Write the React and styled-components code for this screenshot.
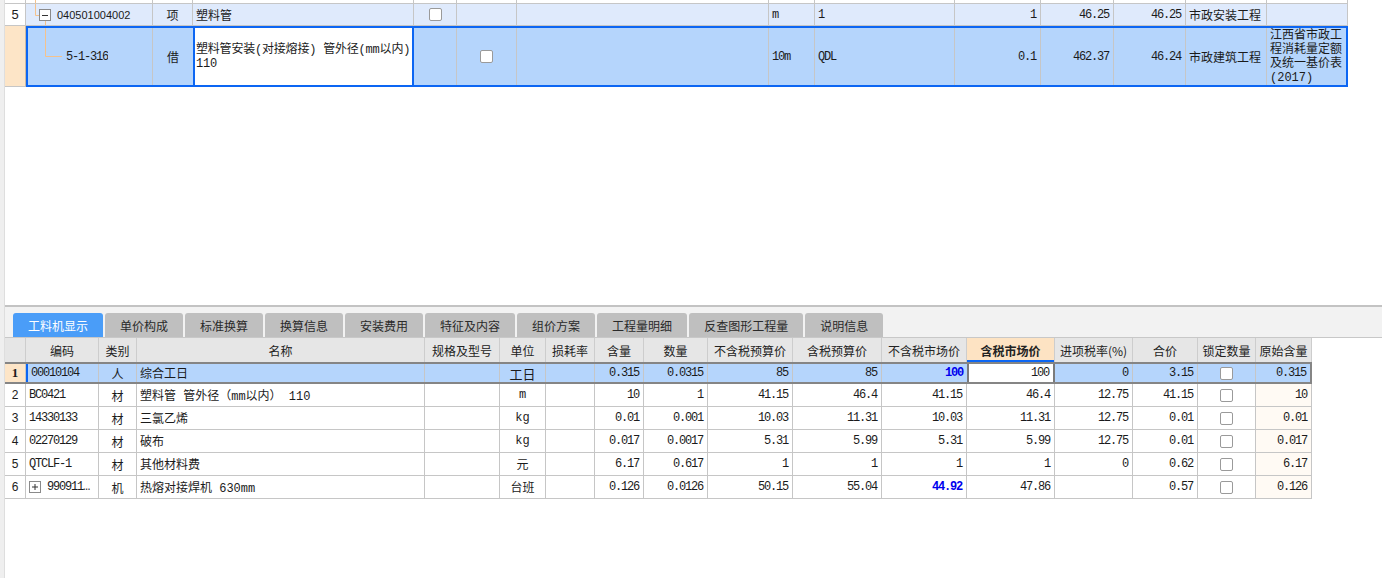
import React from "react";
import styled, { createGlobalStyle } from "styled-components";

const CJK = `"Noto Sans CJK SC", "Noto Sans", sans-serif`;
const MONO = `"Liberation Mono", "Noto Sans CJK SC", monospace`;
const SANS = `"Liberation Sans", "Noto Sans CJK SC", sans-serif`;
const SERIF = `"Liberation Serif", "Noto Sans CJK SC", serif`;

const GRID = "#c6c6c6";
const DARK = "#858585";
const BLUE = "#0c66f3";
const PEACH = "#fde5c7";
const ROW_BLUE = "#dfeafc";
const SEL_BLUE = "#b5d5fc";
const TREE = "#f4c28d";

const fonts = { cjk: CJK, mono: MONO, num: MONO, sans: SANS, serif: SERIF };

const TOP_COLS = [21, 127, 40, 221, 43, 60, 252, 46, 140, 86, 73, 72, 81, 81];
const SEL_COLS = [125, 40, 221, 43, 60, 252, 46, 140, 86, 73, 72, 81, 79];
const BOT_COLS = [21, 73, 38, 288, 75, 46, 49, 49, 64, 85, 89, 85, 88, 78, 65, 58, 56];
const px = (a) => a.map((v) => v + "px").join(" ");
const sum = (a) => a.reduce((s, v) => s + v, 0);

const GlobalStyle = createGlobalStyle`
  *, *::before, *::after { box-sizing: border-box; }
  html, body { margin: 0; padding: 0; background: #fff; }
  body { font-family: ${CJK}; font-size: 12px; color: #1b1b1b; }
`;

const Frame = styled.div`
  display: flex;
  width: 1382px;
  height: 578px;
  overflow: hidden;
  background: #fff;
`;

const Rail = styled.div`
  width: 5px;
  flex: none;
  background: #efefef;
  border-right: 1px solid #dedede;
`;

const Main = styled.div`
  flex: 1;
  min-width: 0;
  display: flex;
  flex-direction: column;
`;

const TopPane = styled.div`
  height: 305px;
  flex: none;
  overflow: hidden;
`;

const Splitter = styled.div`
  height: 2px;
  flex: none;
  background: #c3c3c3;
`;

const Cell = styled.div`
  display: flex;
  align-items: center;
  justify-content: ${(p) =>
    p.$align === "right" ? "flex-end" : p.$align === "center" ? "center" : "flex-start"};
  min-width: 0;
  padding: ${(p) =>
    p.$pad ?? (p.$align === "right" ? "0 4px 0 2px" : p.$align === "center" ? "0" : "0 2px 0 3px")};
  border-right: ${(p) => p.$right ?? `1px solid ${GRID}`};
  border-left: ${(p) => p.$left ?? "none"};
  background: ${(p) => p.$bg ?? "transparent"};
  color: ${(p) => p.$color ?? "inherit"};
  font-family: ${(p) => fonts[p.$font ?? "cjk"]};
  font-size: ${(p) => p.$size ?? 12}px;
  font-weight: ${(p) => (p.$bold ? 700 : 400)};
  letter-spacing: ${(p) => (p.$font === "num" ? "-1.2px" : "0")};
  white-space: nowrap;
  overflow: hidden;
`;

const WrapCell = styled(Cell)`
  white-space: normal;
  word-break: break-all;
  line-height: 14px;
`;

const EditCell = styled(Cell)`
  line-height: 14px;
  letter-spacing: -0.2px;
`;

const TopRow = styled.div`
  display: grid;
  grid-template-columns: ${px(TOP_COLS)};
  width: ${sum(TOP_COLS)}px;
  height: ${(p) => p.$h}px;
  background: ${(p) => p.$bg ?? "transparent"};
  border-bottom: 1px solid ${GRID};
`;

const SelRow = styled.div`
  display: flex;
  height: 61px;
`;

const SelNum = styled.div`
  width: 21px;
  flex: none;
  background: ${PEACH};
  border-right: 1px solid #c9b9a4;
  border-bottom: 1px solid ${GRID};
`;

const SelBody = styled.div`
  display: grid;
  grid-template-columns: ${px(SEL_COLS)};
  width: ${sum(SEL_COLS) + 4}px;
  border: 2px solid ${BLUE};
  background: ${SEL_BLUE};
`;

const Tree = styled.svg`
  flex: none;
  display: block;
`;

const Checkbox = styled.span`
  display: block;
  width: 13px;
  height: 13px;
  background: #fff;
  border: 1px solid #9a9a9a;
  border-radius: 2px;
`;

const Code = styled.span`
  font-family: ${SANS};
  font-size: 11px;
`;

const TabBar = styled.div`
  height: 31px;
  flex: none;
  display: flex;
  align-items: flex-end;
  gap: 2px;
  padding-left: 8px;
  background: #f2f2f2;
  border-bottom: 1px solid #c8c8c8;
`;

const Tab = styled.div`
  height: 24px;
  padding: 0 15px;
  display: flex;
  align-items: center;
  border-radius: 3px 3px 0 0;
  font-size: 12px;
  background: ${(p) => (p.$active ? "#4a9df8" : "#bfbfbf")};
  color: ${(p) => (p.$active ? "#fff" : "#2a2a2a")};
`;

const BotRow = styled.div`
  display: grid;
  grid-template-columns: ${px(BOT_COLS)};
  width: ${sum(BOT_COLS)}px;
  height: ${(p) => p.$h}px;
  background: ${(p) => p.$bg ?? "#fff"};
  border-bottom: ${(p) => p.$bottom ?? `1px solid ${GRID}`};
`;

const HeadCell = styled(Cell)`
  justify-content: center;
  padding: 0;
  color: #222;
  border-right: 1px solid #cdcdcd;
  background: ${(p) => (p.$hot ? "#fde3c3" : "#e6e6e6")};
  box-shadow: ${(p) => (p.$hot ? `inset 0 -2px 0 ${BLUE}` : "none")};
  font-weight: ${(p) => (p.$hot ? 700 : 400)};
`;

const CodeWithBox = styled.span`
  display: flex;
  align-items: center;
  gap: 6px;
`;

function MiniBox({ plus }) {
  return (
    <Tree width="12" height="12" viewBox="0 0 12 12">
      <rect x="0.5" y="0.5" width="11" height="11" fill="#fff" stroke="#8a8a8a" />
      <line x1="3" y1="6" x2="9" y2="6" stroke="#333" />
      {plus && <line x1="6" y1="3" x2="6" y2="9" stroke="#333" />}
    </Tree>
  );
}

const TABS = ["工料机显示", "单价构成", "标准换算", "换算信息", "安装费用", "特征及内容", "组价方案", "工程量明细", "反查图形工程量", "说明信息"];

const HEAD = ["", "编码", "类别", "名称", "规格及型号", "单位", "损耗率", "含量", "数量", "不含税预算价", "含税预算价", "不含税市场价", "含税市场价", "进项税率(%)", "合价", "锁定数量", "原始含量"];

const SPEC = [
  { a: "center", f: "sans" },
  { a: "left", f: "num" },
  { a: "center", f: "cjk" },
  { a: "left", f: "mono" },
  { a: "left", f: "mono" },
  { a: "center", f: "mono" },
  { a: "right", f: "num" },
  { a: "right", f: "num" },
  { a: "right", f: "num" },
  { a: "right", f: "num" },
  { a: "right", f: "num" },
  { a: "right", f: "num" },
  { a: "right", f: "num" },
  { a: "right", f: "num" },
  { a: "right", f: "num" },
  { a: "center", f: "cjk" },
  { a: "right", f: "num" },
];

const ROWS = [
  ["2", "BC0421", "材", "塑料管 管外径（mm以内） 110", "", "m", "", "10", "1", "41.15", "46.4", "41.15", "46.4", "12.75", "41.15", "cb", "10"],
  ["3", "14330133", "材", "三氯乙烯", "", "kg", "", "0.01", "0.001", "10.03", "11.31", "10.03", "11.31", "12.75", "0.01", "cb", "0.01"],
  ["4", "02270129", "材", "破布", "", "kg", "", "0.017", "0.0017", "5.31", "5.99", "5.31", "5.99", "12.75", "0.01", "cb", "0.017"],
  ["5", "QTCLF-1", "材", "其他材料费", "", "元", "", "6.17", "0.617", "1", "1", "1", "1", "0", "0.62", "cb", "6.17"],
  ["6", "plus:990911…", "机", "热熔对接焊机 630mm", "", "台班", "", "0.126", "0.0126", "50.15", "55.04", "!44.92", "47.86", "", "0.57", "cb", "0.126"],
];

function renderValue(v) {
  if (v === "cb") return <Checkbox />;
  if (v.startsWith("plus:"))
    return (
      <CodeWithBox>
        <MiniBox plus />
        {v.slice(5)}
      </CodeWithBox>
    );
  if (v.startsWith("!")) return v.slice(1);
  return v;
}

function TopTable() {
  return (
    <>
      <TopRow $h={4}>
        {TOP_COLS.map((_, i) => (
          <Cell key={i} $pad="0">
            {i === 1 && (
              <Tree width="20" height="3">
                <line x1="9.5" y1="0" x2="9.5" y2="3" stroke={TREE} />
              </Tree>
            )}
          </Cell>
        ))}
      </TopRow>
      <TopRow $h={22} $bg={ROW_BLUE}>
        <Cell $align="center" $bg="#fff" $font="sans" $size={13}>5</Cell>
        <Cell $pad="0">
          <Tree width="31" height="21">
            <line x1="9.5" y1="0" x2="9.5" y2="11.5" stroke={TREE} />
            <line x1="9.5" y1="11.5" x2="13" y2="11.5" stroke={TREE} />
            <line x1="19.5" y1="17" x2="19.5" y2="21" stroke={TREE} />
            <rect x="13.5" y="5.5" width="11" height="11" fill="#fff" stroke="#8a8a8a" />
            <line x1="16" y1="11.5" x2="22" y2="11.5" stroke="#333" />
          </Tree>
          <Code>040501004002</Code>
        </Cell>
        <Cell $align="center">项</Cell>
        <Cell>塑料管</Cell>
        <Cell $align="center"><Checkbox /></Cell>
        <Cell />
        <Cell />
        <Cell $font="num">m</Cell>
        <Cell $font="num">1</Cell>
        <Cell $align="right" $font="num">1</Cell>
        <Cell $align="right" $font="num">46.25</Cell>
        <Cell $align="right" $font="num">46.25</Cell>
        <Cell>市政安装工程</Cell>
        <Cell />
      </TopRow>
      <SelRow>
        <SelNum />
        <SelBody>
          <Cell $pad="0">
            <Tree width="38" height="57">
              <line x1="17.5" y1="0" x2="17.5" y2="28.5" stroke={TREE} />
              <line x1="17.5" y1="28.5" x2="34" y2="28.5" stroke={TREE} />
            </Tree>
            <Cell as="span" $font="num" $pad="0" $right="none">5-1-316</Cell>
          </Cell>
          <Cell $align="center" $right="none">借</Cell>
          <EditCell $font="mono" $bg="#fff" $pad="0 0 0 1px" $left={`2px solid ${BLUE}`} $right={`2px solid ${BLUE}`}>
            <span>
              塑料管安装(对接熔接) 管外径(mm以内)
              <br />
              110
            </span>
          </EditCell>
          <Cell />
          <Cell $align="center"><Checkbox /></Cell>
          <Cell />
          <Cell $font="num">10m</Cell>
          <Cell $font="num">QDL</Cell>
          <Cell $align="right" $font="num">0.1</Cell>
          <Cell $align="right" $font="num">462.37</Cell>
          <Cell $align="right" $font="num">46.24</Cell>
          <Cell>市政建筑工程</Cell>
          <WrapCell $font="mono" $right="none">江西省市政工程消耗量定额及统一基价表(2017)</WrapCell>
        </SelBody>
      </SelRow>
    </>
  );
}

function BottomTable() {
  const first = ["1", "00010104", "人", "综合工日", "", "工日", "", "0.315", "0.0315", "85", "85", "100", "100", "0", "3.15", "cb", "0.315"];
  return (
    <>
      <BotRow $h={26} $bg="#e6e6e6" $bottom={`2px solid ${DARK}`}>
        {HEAD.map((h, i) => (
          <HeadCell key={i} $hot={i === 12}>{h}</HeadCell>
        ))}
      </BotRow>
      <BotRow $h={20} $bg={SEL_BLUE} $bottom={`2px solid ${DARK}`}>
        {first.map((v, i) => {
          const s = SPEC[i];
          const props = { $align: s.a, $font: s.f };
          if (i === 0) Object.assign(props, { $bg: PEACH, $font: "serif", $bold: true, $size: 13 });
          if (i === 1) props.$left = `2px solid ${BLUE}`;
          if (i === 5) props.$size = 13;
          if (i === 11) Object.assign(props, { $bold: true, $color: "#0000ee", $right: "none" });
          if (i === 12) Object.assign(props, { $bg: "#fff", $left: `2px solid #7b7b7b`, $right: `2px solid #7b7b7b` });
          if (i === 16) props.$right = `2px solid ${DARK}`;
          return (
            <Cell key={i} {...props}>
              {renderValue(v)}
            </Cell>
          );
        })}
      </BotRow>
      {ROWS.map((row) => (
        <BotRow key={row[0]} $h={23}>
          {row.map((v, i) => {
            const s = SPEC[i];
            const blue = v.startsWith("!");
            return (
              <Cell
                key={i}
                $align={s.a}
                $font={s.f}
                $bg={i === 16 ? "#fffaf4" : undefined}
                $bold={blue}
                $color={blue ? "#0000ee" : undefined}
              >
                {renderValue(v)}
              </Cell>
            );
          })}
        </BotRow>
      ))}
    </>
  );
}

export default function App() {
  return (
    <>
      <GlobalStyle />
      <Frame>
        <Rail />
        <Main>
          <TopPane>
            <TopTable />
          </TopPane>
          <Splitter />
          <TabBar>
            {TABS.map((t, i) => (
              <Tab key={t} $active={i === 0}>{t}</Tab>
            ))}
          </TabBar>
          <BottomTable />
        </Main>
      </Frame>
    </>
  );
}
